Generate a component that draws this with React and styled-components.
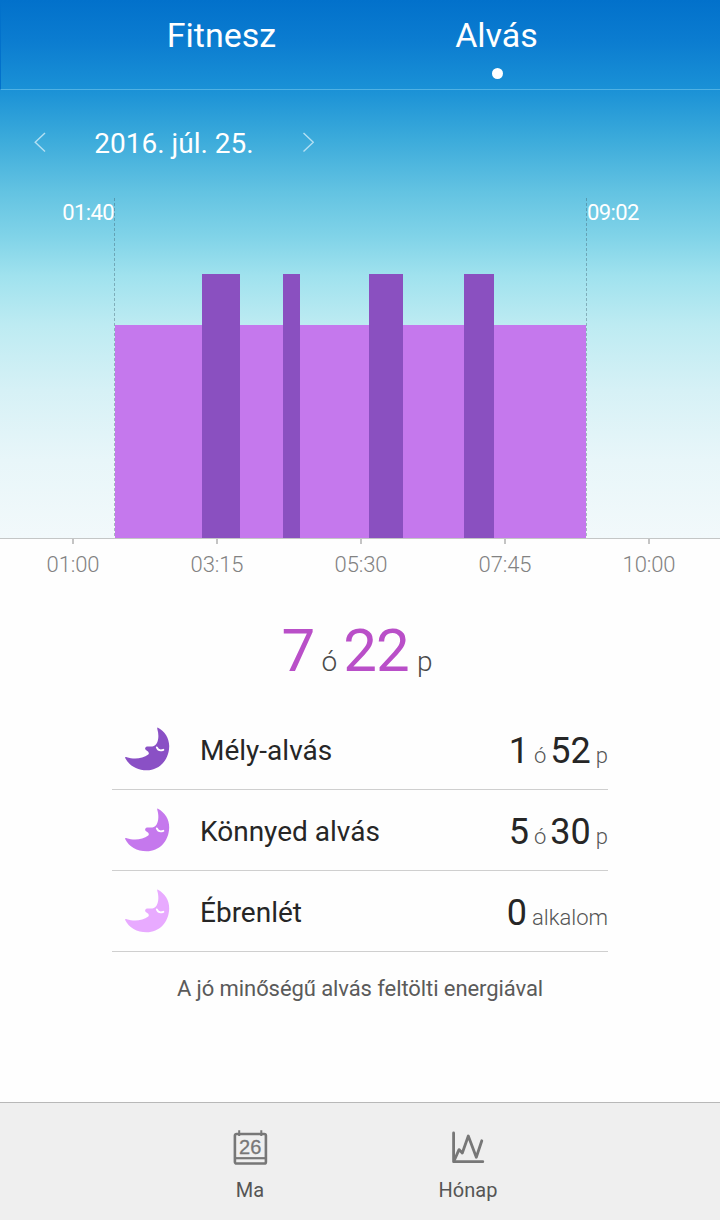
import React from 'react';
import styled, { createGlobalStyle } from 'styled-components';

const GlobalStyle = createGlobalStyle`
  * {
    box-sizing: border-box;
  }

  body {
    margin: 0;
    background: #fefefe;
    font-family: Roboto, 'Liberation Sans', sans-serif;
  }
`;

const Page = styled.div`
  display: flex;
  flex-direction: column;
  width: 720px;
  height: 1220px;
`;

const Sky = styled.div`
  display: flex;
  flex-direction: column;
  height: 539px;
  border-bottom: 1px solid #c4c6c6;
  background: linear-gradient(
    #0271cb 0px,
    #0b7cd0 40px,
    #1a91d6 89px,
    #3cabdb 140px,
    #63c3e2 192px,
    #80d3e8 236px,
    #a0e2ee 276px,
    #bdebf2 325px,
    #d6f1f6 390px,
    #e8f6f9 460px,
    #f2f9fb 538px
  );
`;

const Tabs = styled.nav`
  display: flex;
  height: 90px;
  padding: 0 83px;
  border-left: 1px solid #0271cb;
  border-bottom: 1px solid #50b2e4;
`;

const Tab = styled.div`
  display: flex;
  flex-direction: column;
  align-items: center;
  width: 275px;
  padding-top: 15px;
  color: #fff;
  font-size: 34px;
  line-height: 40px;
`;

const Dot = styled.span`
  width: 11px;
  height: 11px;
  margin: 13px 0 0 2px;
  border-radius: 50%;
  background: #fff;
`;

const DateBar = styled.div`
  display: flex;
  align-items: center;
  height: 108px;
  padding-left: 34px;
`;

const DateText = styled.span`
  width: 256px;
  text-align: center;
  color: #fff;
  font-size: 28px;
  line-height: 34px;
`;

const Chart = styled.div`
  display: flex;
  height: 340px;
`;

const Side = styled.div`
  width: ${(props) => props.$width}px;
  padding-top: 2px;
  text-align: ${(props) => props.$align};
  color: #fff;
  font-size: 22px;
  letter-spacing: -0.6px;
  line-height: 26px;
`;

const Marker = styled.div`
  width: 1px;
  background: repeating-linear-gradient(rgba(60, 90, 105, 0.4) 0 3px, transparent 3px 5px);
`;

const Bars = styled.div`
  display: flex;
  align-items: flex-end;
`;

const Bar = styled.div`
  height: ${(props) => (props.$deep ? 264 : 213)}px;
  background: ${(props) => (props.$deep ? '#8a50c0' : '#c578ed')};
`;

const Axis = styled.div`
  display: flex;
`;

const AxisItem = styled.div`
  display: flex;
  flex-direction: column;
  align-items: center;
  flex: 0 0 144px;
  padding-left: 2px;
  color: #828282;
  font-size: 22px;
  font-weight: 300;
  letter-spacing: -0.1px;
  line-height: 26px;
`;

const Tick = styled.span`
  width: 2px;
  height: 5px;
  margin-bottom: 8px;
  background: #c4c4c4;
`;

const Total = styled.div`
  display: flex;
  justify-content: center;
  align-items: baseline;
  margin-top: 38px;
  padding-right: 6px;
  color: #b94fc8;
  font-size: 60px;
  letter-spacing: -0.8px;
  line-height: 70px;
`;

const TotalUnit = styled.span`
  margin: 0 ${(props) => props.$after || 0}px 0 ${(props) => props.$before || 7}px;
  color: #4a4a4a;
  font-size: 28px;
  font-weight: 300;
  letter-spacing: 0;
`;

const List = styled.div`
  width: 496px;
  margin: 12px auto 0;
`;

const Row = styled.div`
  display: flex;
  align-items: center;
  height: 81px;
  padding-left: 12px;
  border-bottom: 1px solid #cfcfcf;
`;

const RowLabel = styled.span`
  flex: 1;
  margin-left: 30px;
  padding-top: 4px;
  color: #262626;
  font-size: 28px;
  line-height: 34px;
`;

const Value = styled.span`
  display: flex;
  align-items: baseline;
  padding-top: 9px;
  color: #262626;
  font-size: 36px;
  line-height: 42px;
`;

const Unit = styled.span`
  margin: 0 ${(props) => props.$after || 0}px 0 5px;
  color: #555;
  font-size: 22px;
  font-weight: 300;
`;

const Note = styled.p`
  margin: 24px 0 0;
  text-align: center;
  color: #5a5a5a;
  font-size: 22px;
  letter-spacing: -0.08px;
  line-height: 26px;
`;

const BottomBar = styled.footer`
  display: flex;
  justify-content: center;
  height: 118px;
  margin-top: auto;
  padding: 26px 2px 0 0;
  border-top: 1px solid #b8b8b8;
  background: #efefef;
`;

const BottomItem = styled.div`
  display: flex;
  flex-direction: column;
  align-items: center;
  gap: 13px;
  width: 218px;
  color: #555;
  font-size: 20px;
  line-height: 24px;
`;

const Moon = ({ color }) => (
  <svg width="46" height="46" viewBox="0 0 46 46">
    <path
      d="M34 1.7C41 5.5 45.4 12.5 45.2 20.5C44.9 34.5 35 44.3 22.7 44.3C13 44.3 4.8 39.3 1.3 32.2C.8 30.8 1.6 30.8 2.8 31.2C9.5 33.2 18.5 33 24.3 28.4C25.4 27.4 24.7 26.6 24 25.6C23.2 24.6 20.8 24 21.1 22.2C21.4 20.7 23.2 20.4 24.6 20.5C27.2 20.7 30.6 21 32.6 17.6C34.9 13.5 34.8 7.8 33.3 3C33.1 2 33.3 1.4 34 1.7Z"
      fill={color}
    />
    <path d="M32.8 21.4C33.8 24 36.4 24.9 39.4 23.8" fill="none" stroke="#fff" strokeWidth="1.8" strokeLinecap="round" />
  </svg>
);

const Chevron = ({ d }) => (
  <svg width="12" height="24" viewBox="0 0 12 24" fill="none" stroke="#b4e0f3" strokeWidth="1.4">
    <path d={d} />
  </svg>
);

const CalendarIcon = () => (
  <svg width="36" height="36" viewBox="0 0 36 36" fill="none" stroke="#777" strokeWidth="2.6">
    <rect x="2.9" y="5" width="31" height="29.5" rx="1.6" />
    <path d="M3 29.2H34" strokeWidth="2.2" />
    <path d="M7.2 1.2V7M29.3 1.2V7" strokeWidth="2" />
    <text x="18.2" y="25" fill="#777" stroke="#777" strokeWidth=".3" textAnchor="middle" fontSize="20" fontFamily="Liberation Sans, sans-serif">
      26
    </text>
  </svg>
);

const TrendIcon = () => (
  <svg width="36" height="36" viewBox="0 0 36 36" fill="none" stroke="#777" strokeWidth="2.8" strokeLinecap="round" strokeLinejoin="round">
    <path d="M3.6 4V32.7H32.8" />
    <path d="M4.6 30.8L9 20.6L12.3 24L18.3 7L26.3 28.2L31.8 11.8" />
  </svg>
);

const segments = [
  { width: 87 },
  { width: 38, deep: true },
  { width: 43 },
  { width: 17, deep: true },
  { width: 69 },
  { width: 34, deep: true },
  { width: 61 },
  { width: 30, deep: true },
  { width: 92 },
];

const hours = ['01:00', '03:15', '05:30', '07:45', '10:00'];

const App = () => {
  return (
    <Page>
      <GlobalStyle />
      <Sky>
        <Tabs>
          <Tab>Fitnesz</Tab>
          <Tab>
            Alvás
            <Dot />
          </Tab>
        </Tabs>
        <DateBar>
          <Chevron d="M11 1L1.2 10.3L11 19.6" />
          <DateText>2016. júl. 25.</DateText>
          <Chevron d="M1.5 1L11.3 10.3L1.5 19.6" />
        </DateBar>
        <Chart>
          <Side $width={114} $align="right">01:40</Side>
          <Marker />
          <Bars>
            {segments.map((item, index) => (
              <Bar key={index} $deep={item.deep} style={{ width: item.width }} />
            ))}
          </Bars>
          <Marker />
          <Side $width={133} $align="left">09:02</Side>
        </Chart>
      </Sky>
      <Axis>
        {hours.map((hour) => (
          <AxisItem key={hour}>
            <Tick />
            {hour}
          </AxisItem>
        ))}
      </Axis>
      <Total>
        7<TotalUnit $after={6}>ó</TotalUnit>22<TotalUnit $before={8}>p</TotalUnit>
      </Total>
      <List>
        <Row>
          <Moon color="#8a50c5" />
          <RowLabel>Mély-alvás</RowLabel>
          <Value>
            1<Unit $after={4}>ó</Unit>52<Unit>p</Unit>
          </Value>
        </Row>
        <Row>
          <Moon color="#c578ed" />
          <RowLabel>Könnyed alvás</RowLabel>
          <Value>
            5<Unit $after={4}>ó</Unit>30<Unit>p</Unit>
          </Value>
        </Row>
        <Row>
          <Moon color="#e8aaff" />
          <RowLabel>Ébrenlét</RowLabel>
          <Value>
            0<Unit>alkalom</Unit>
          </Value>
        </Row>
      </List>
      <Note>A jó minőségű alvás feltölti energiával</Note>
      <BottomBar>
        <BottomItem>
          <CalendarIcon />
          Ma
        </BottomItem>
        <BottomItem>
          <TrendIcon />
          Hónap
        </BottomItem>
      </BottomBar>
    </Page>
  );
};

export default App;
